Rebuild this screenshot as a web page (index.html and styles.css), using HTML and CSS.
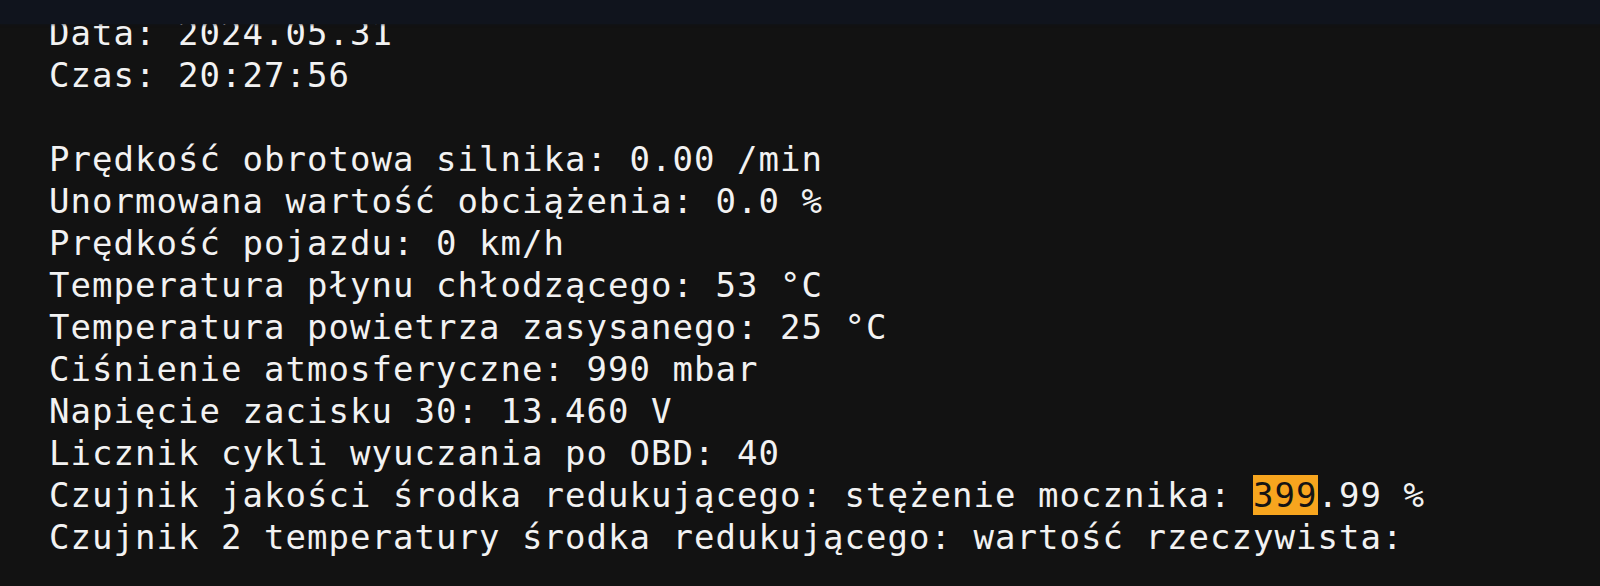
FILE: index.html
```html
<!DOCTYPE html>
<html lang="pl">
<head>
<meta charset="utf-8">
<title>OBD</title>
<link rel="stylesheet" href="styles.css">
</head>
<body>
<div class="statusbar"></div>
<pre class="term">Data: 2024.05.31
Czas: 20:27:56

Prędkość obrotowa silnika: 0.00 /min
Unormowana wartość obciążenia: 0.0 %
Prędkość pojazdu: 0 km/h
Temperatura płynu chłodzącego: 53 °C
Temperatura powietrza zasysanego: 25 °C
Ciśnienie atmosferyczne: 990 mbar
Napięcie zacisku 30: 13.460 V
Licznik cykli wyuczania po OBD: 40
Czujnik jakości środka redukującego: stężenie mocznika: <span class="hl">399</span>.99 %
Czujnik 2 temperatury środka redukującego: wartość rzeczywista:</pre>
</body>
</html>
```
FILE: styles.css
```css
html, body {
  margin: 0;
  padding: 0;
  background: #121212;
  height: 100%;
  overflow: hidden;
}
.statusbar {
  position: fixed;
  top: 0;
  left: 0;
  right: 0;
  height: 24px;
  background: #10141d;
  box-shadow: 0 1px 2px rgba(16, 20, 29, 0.6);
  z-index: 2;
}
.term {
  margin: 0;
  padding: 12px 0 0 49px;
  font-family: "DejaVu Sans Mono", monospace;
  font-size: 34px;
  letter-spacing: 1.03px;
  line-height: 42px;
  color: #f2f2f2;
  white-space: pre;
}
.hl {
  background: #f7a51e;
  color: #141414;
}
```
